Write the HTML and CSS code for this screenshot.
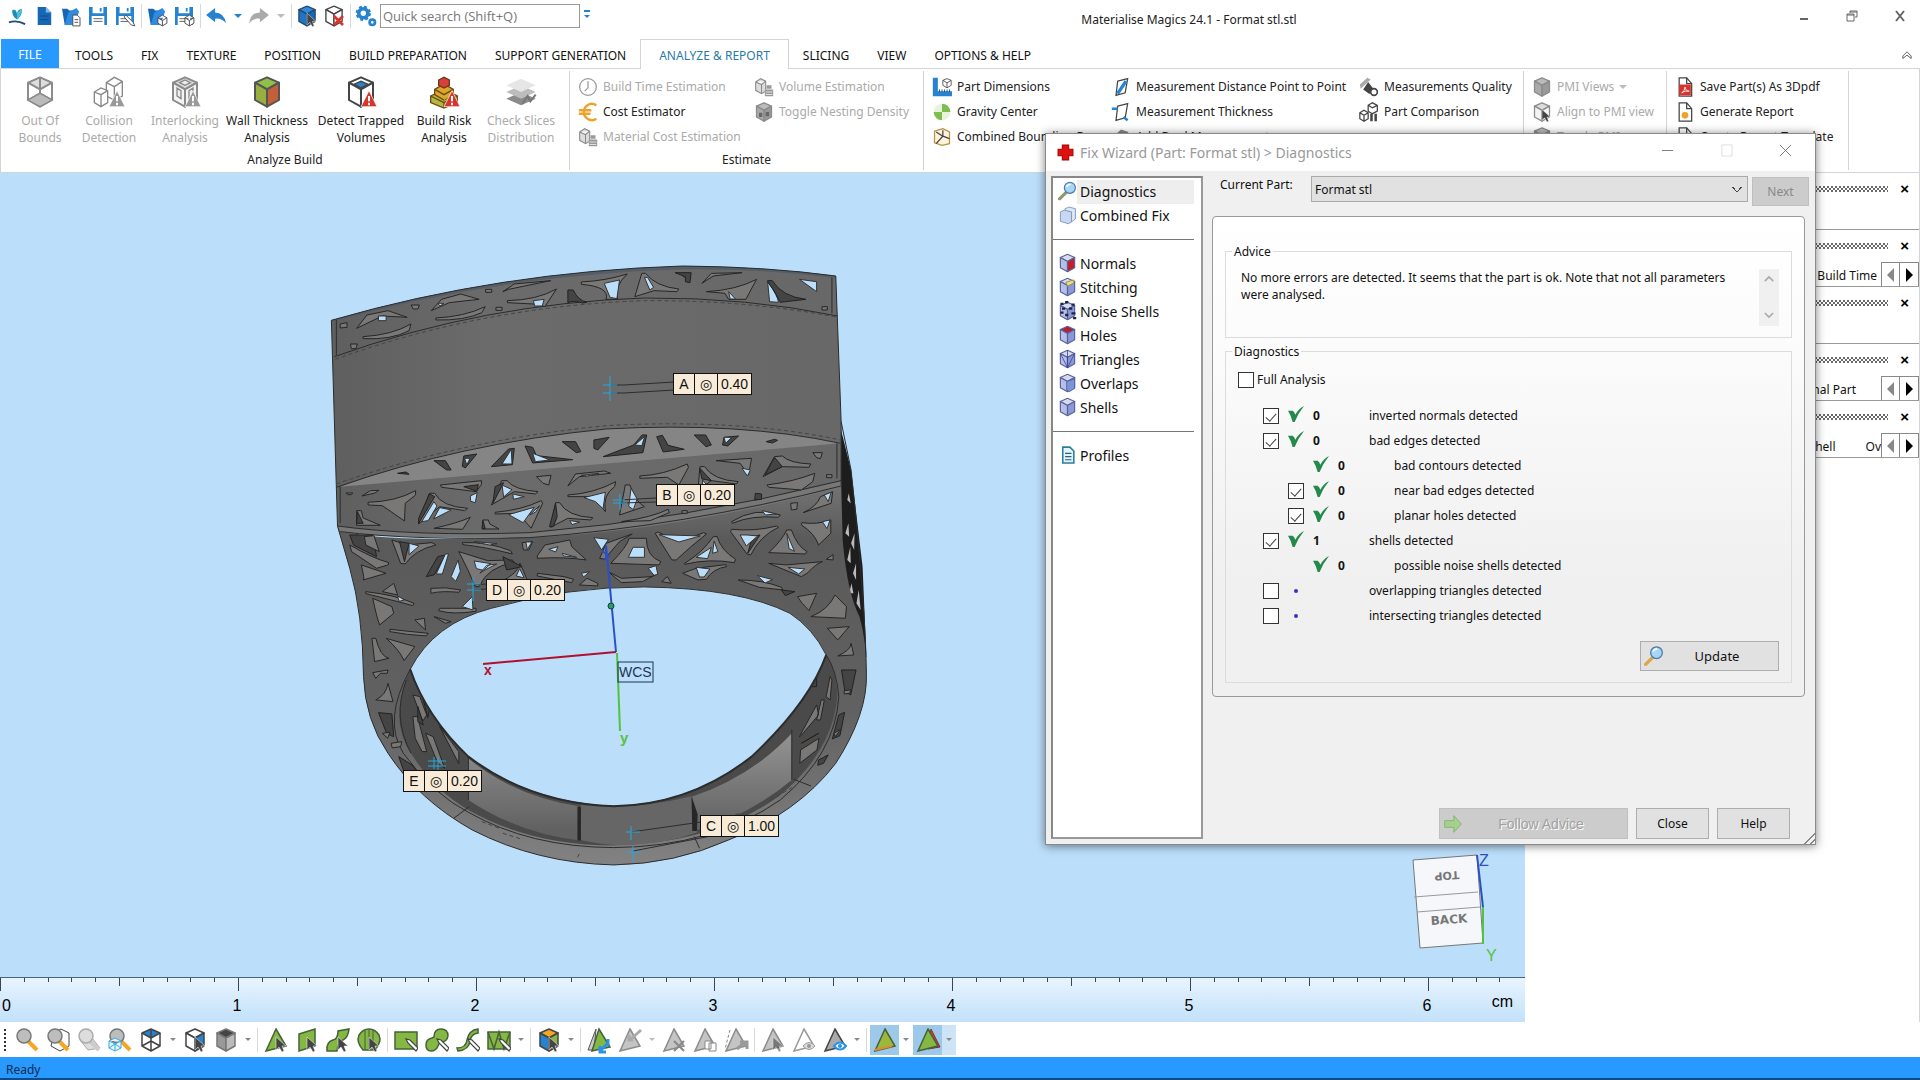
FILE: index.html
```html
<!DOCTYPE html>
<html lang="en">

<head>
    <meta charset="UTF-8">
    <meta name="viewport" content="width=device-width, initial-scale=1.0">
    <title>Materialise Magics 24.1 - Format stl.stl</title>
    <link rel="stylesheet" href="styles.css">
</head>

<body>
    <!-- icon sprite -->
    <svg class="sprite" aria-hidden="true">
        <symbol id="cube" viewBox="0 0 24 24">
            <path class="t" d="M12 1 21 5 12 10 3 5z" />
            <path class="l" d="M3 5 12 10V23L3 18z" />
            <path class="r" d="M21 5 12 10V23L21 18z" />
        </symbol>
        <symbol id="wirecube" viewBox="0 0 24 24">
            <path class="t" d="M12 1 21 5 12 10 3 5z" />
            <path class="n" d="M3 5V18L12 23 21 18V5M12 10V23M3 18 12 13 21 18M12 13V1" />
        </symbol>
        <symbol id="logo" viewBox="0 0 24 24">
            <path d="M7 5c4 0 4 1 5 4 1-3 2-4 5-5 1 5-1 9-5 12C8 13 6 9 7 5z" fill="#1b8fae" />
            <path d="M12 9l5-5c0 5-2 9-5 12z" fill="#45c4e0" />
            <path d="M3 19q9-3 18 2" fill="none" stroke="#1d4d7e" stroke-width="2" />
        </symbol>
        <symbol id="doc" viewBox="0 0 24 24">
            <path d="M5 2h9l6 6v14H5z" fill="#1767b5" />
            <path d="M14 2v6h6z" fill="#7db9e8" />
            <path d="M8 12h9M8 16h9" stroke="#0d4b8c" />
        </symbol>
        <symbol id="open" viewBox="0 0 24 24">
            <path d="M2 4h6l2 2h7l-2 16H5z" fill="#1767b5" />
            <path d="M5 22 9 8l9-5 3 4-5 15z" fill="#2e8be0" />
        </symbol>
        <symbol id="save" viewBox="0 0 24 24">
            <path d="M2 2h20v20H2z" fill="#2583cf" />
            <path d="M6 2h12v7H6zM5 12h14v10H5z" fill="#fff" />
            <path d="M14 3h2v4h-2z" fill="#2583cf" />
            <path d="M7 15h10M7 18h10" stroke="#555" />
        </symbol>
        <symbol id="undo" viewBox="0 0 24 24">
            <path d="M1 11 11 3v5q10 0 12 12-5-6-12-5v4z" fill="currentColor" />
        </symbol>
        <symbol id="page" viewBox="0 0 24 24">
            <path d="M5 1h9l6 7v15H5z" fill="#fff" stroke="#444" stroke-width="1.5" />
            <path d="M14 1v7h6" fill="none" stroke="#444" stroke-width="1.5" />
        </symbol>
        <symbol id="cursor" viewBox="0 0 24 24">
            <path d="M12 9v13l3-3 3 5 2-1-2-5h4z" fill="#444" stroke="#fff" stroke-width=".5" />
        </symbol>
        <symbol id="pencil" viewBox="0 0 24 24">
            <path d="M12 11l2 4 8 8 2-3-8-8z" fill="#fff" stroke="#444" stroke-width="1.2" />
        </symbol>
        <symbol id="warn" viewBox="0 0 24 24">
            <path d="M18 11 24 23H12z" fill="currentColor" stroke="#fff" stroke-width=".5" />
            <path d="M18 15v4M18 20v2" stroke="#fff" stroke-width="1.5" />
        </symbol>
        <symbol id="lens" viewBox="0 0 24 24">
            <path d="M13 13l9 9" stroke="var(--h, #f5a623)" stroke-width="4" />
            <circle cx="9" cy="8" r="7" fill="var(--g, #bdbdbd)" stroke="var(--e, #777)" stroke-width="1.5" />
        </symbol>
        <symbol id="glass" viewBox="0 0 24 24">
            <path d="M11 13 2 22" stroke="var(--h, #8b9b6a)" stroke-width="4" stroke-linecap="round" />
            <circle cx="15" cy="8" r="7" fill="#a8d4f5" stroke="#4a7ba8" stroke-width="1.5" />
            <path d="M11 7q1-4 5-3" stroke="#fff" stroke-width="2" fill="none" />
        </symbol>
        <symbol id="tri" viewBox="0 0 24 24">
            <path d="M12 1 22 18 2 23z" fill="var(--g, #85b843)" stroke="var(--e, #44613a)" stroke-width="1.5" />
        </symbol>
        <symbol id="blocks" viewBox="0 0 24 24">
            <path d="M2 6 8 2l6 3v12l-5 3-7-4zM2 6l7 3 5-4M9 9v11" fill="#ddd" stroke="#8b8b8b" stroke-width="1.3" />
            <path d="M13 15h10v8H13zM15 10h6v4h-6z" fill="#999" />
            <path d="M14 18h8M14 21h8" stroke="#eee" />
        </symbol>
        <symbol id="tick" viewBox="0 0 24 24">
            <path d="M0 7 7 7Q10 9 11 13 16 4 24 0 15 11 10 24L7 24Q5 15 0 7z" fill="#238a4b" />
        </symbol>
        <symbol id="plane" viewBox="0 0 24 24">
            <path d="M8 5 20 2 17 19 6 22z" fill="#fff" stroke="#444" stroke-width="1.5" />
        </symbol>
    </svg>

    <header class="titlebar">
        <nav class="quick" aria-label="Quick access">
            <button><svg><use href="#logo" /></svg></button>
            <button><svg><use href="#doc" /></svg></button>
            <button><svg><use href="#open" /><path d="M14 11h5l3 3v9h-8z" fill="#fff" stroke="#444" /><path d="M16 16h4M16 19h4" stroke="#444" /></svg></button>
            <button><svg><use href="#save" /></svg></button>
            <button><svg><use href="#save" /><path d="M13 11l8 8 2 4-4-1-8-9z" fill="#fff" stroke="#444" /></svg></button>
            <i class="vline"></i>
            <button><svg><use href="#open" /><path d="M13 14l5-3 5 3v6l-5 3-5-3zM13 14l5 3 5-3M18 17v6" fill="#fff" stroke="#444" /></svg></button>
            <button><svg><use href="#save" /><path d="M13 14l5-3 5 3v6l-5 3-5-3zM13 14l5 3 5-3M18 17v6" fill="#fff" stroke="#444" /></svg></button>
            <i class="vline"></i>
            <button class="undo"><svg><use href="#undo" /></svg></button>
            <i class="drop blue"></i>
            <button class="redo"><svg viewBox="0 0 24 24"><path d="M23 11 13 3v5Q3 8 1 20q5-6 12-5v4z" fill="currentColor" /></svg></button>
            <i class="drop pale"></i>
            <i class="vline"></i>
            <button class="c-blue"><svg><use href="#cube" /><use href="#cursor" /></svg></button>
            <button class="c-line"><svg><use href="#cube" /><path d="M12 12l10 10M22 12 12 22" stroke="#d9342b" stroke-width="3" /></svg></button>
            <i class="vline"></i>
            <button><svg><circle cx="9" cy="9" r="5" fill="none" stroke="#2583cf" stroke-width="4" /><circle cx="9" cy="9" r="7" fill="none" stroke="#2583cf" stroke-width="3" stroke-dasharray="3 2.500" /><circle cx="19" cy="19" r="3" fill="none" stroke="#2583cf" stroke-width="3" /></svg></button>
            <input type="search" placeholder="Quick search (Shift+Q)" aria-label="Quick search">
            <i class="drop more"></i>
        </nav>
        <h1>Materialise Magics 24.1 - Format stl.stl</h1>
        <div class="winbtns">
            <button aria-label="Minimize"><svg viewBox="0 0 12 12"><path d="M2 9h8" stroke-width="2" /></svg></button>
            <button aria-label="Restore"><svg viewBox="0 0 12 12"><path d="M4 3V1h7v6H9M1 4h7v7H1zM1 5h7M4 2h7" /></svg></button>
            <button aria-label="Close window"><svg viewBox="0 0 12 12"><path d="M2 1l8 10M10 1 2 11" stroke-width="2" /></svg></button>
        </div>
    </header>

    <nav class="tabs">
        <a class="file" href="#">FILE</a>
        <a href="#">TOOLS</a>
        <a href="#">FIX</a>
        <a href="#">TEXTURE</a>
        <a href="#">POSITION</a>
        <a href="#">BUILD PREPARATION</a>
        <a href="#">SUPPORT GENERATION</a>
        <a class="active" href="#">ANALYZE &amp; REPORT</a>
        <a href="#">SLICING</a>
        <a href="#">VIEW</a>
        <a href="#">OPTIONS &amp; HELP</a>
        <button class="collapse" aria-label="Collapse ribbon"><svg viewBox="0 0 12 12"><path d="M1 6 6 1l5 5v3L6 5 1 9z" /></svg></button>
    </nav>

    <section class="ribbon">
        <div class="group build">
            <div class="big">
                <button disabled><svg viewBox="0 0 24 24" class="c-grey"><use href="#wirecube" /><path d="M3 18l9-5 9 5-9 5z" fill="#bbb" stroke="#8b8b8b" /></svg>Out Of<br>Bounds</button>
                <button disabled><svg viewBox="0 0 24 24" class="grey"><path d="M10 5l6-4 6 3v11l-6 3-6-3zM10 5l6 3 6-4M16 8v10" fill="#fff" stroke="#888" /><path d="M1 12l5-3 5 2v9l-5 3-5-3zM1 12l5 2 5-3M6 14v9" fill="#fff" stroke="#888" /><use href="#warn" /></svg>Collision<br>Detection</button>
                <button disabled><svg viewBox="0 0 24 24" class="c-grey grey"><use href="#cube" /><path d="M6 9l3 2v6l-3-2zM18 9l-3 2v6l3-2zM8 5l4-2 4 2-4 2z" fill="#eee" stroke="#888" /><use href="#warn" /></svg>Interlocking<br>Analysis</button>
                <button><svg viewBox="0 0 24 24" class="c-wall"><use href="#cube" /></svg>Wall Thickness<br>Analysis</button>
                <button><svg viewBox="0 0 24 24" class="c-line red"><use href="#cube" /><path d="M7 6l5-2 5 2-5 3z" fill="#2583cf" stroke="#444" /><use href="#warn" /></svg>Detect Trapped<br>Volumes</button>
                <button><svg viewBox="0 0 24 24" class="red"><path d="M2 15l10-5 10 5v5l-10 4-10-4z" fill="#b5b83b" stroke="#6b4a1b" /><path d="M5 10l7-4 7 4v4l-7 4-7-4z" fill="#e0a52a" stroke="#6b4a1b" /><path d="M12 14l7-4v4l-7 4z" fill="#cfae2a" /><path d="M8 3l4-2 4 2v4l-4 2-4-2z" fill="#d9403a" stroke="#6b3a1b" /><path d="M2 15l10 5 10-5M12 20v4M5 10l7 4 7-4" fill="none" stroke="#6b4a1b" /><use href="#warn" /></svg>Build Risk<br>Analysis</button>
                <button disabled><svg viewBox="0 0 24 24"><path d="M1 17l11-5 11 5-11 5z" fill="#8b8b8b" /><path d="M1 12l11-5 11 5-11 5z" fill="#bcbcbc" /><path d="M1 7l11-5 11 5-11 5z" fill="#e6e6e6" /><path d="M13 21l4-6 2 4 4-5" fill="none" stroke="#777" stroke-width="1.500" /></svg>Check Slices<br>Distribution</button>
            </div>
            <h2>Analyze Build</h2>
        </div>

        <div class="group estimate">
            <div class="cols">
                <div>
                    <button disabled><svg viewBox="0 0 24 24"><circle cx="12" cy="12" r="10" fill="#fff" stroke="#999" stroke-width="1.500" /><path d="M12 5v8l-4 4" fill="none" stroke="#999" stroke-width="1.500" /></svg>Build Time Estimation</button>
                    <button><svg viewBox="0 0 24 24"><path d="M22 4q-5-3-9-1-6 3-6 9t6 9q5 2 9-1M1 10h15M1 14h14" fill="none" stroke="#eca32b" stroke-width="3" /></svg>Cost Estimator</button>
                    <button disabled><svg viewBox="0 0 24 24"><use href="#blocks" /></svg>Material Cost Estimation</button>
                </div>
                <div>
                    <button disabled><svg viewBox="0 0 24 24"><use href="#blocks" /></svg>Volume Estimation</button>
                    <button disabled><svg viewBox="0 0 24 24" class="c-dim"><use href="#cube" /><path d="M6 13h4v5H6zM14 12h4v5h-4z" fill="#666" /></svg>Toggle Nesting Density</button>
                </div>
            </div>
            <h2>Estimate</h2>
        </div>

        <div class="group measure">
            <div class="cols">
                <div>
                    <button><svg viewBox="0 0 24 24"><path d="M1 1h6v16h17v6H1z" fill="#2583cf" /><path d="M9 15v3M12 15v3M15 15v3M18 15v3M21 15v3" stroke="#143c6b" /><path d="M13 4l5-2 5 2v6l-5 3-5-3zM13 4l5 3 5-3M18 7v6" fill="#fff" stroke="#444" /></svg>Part Dimensions</button>
                    <button><svg viewBox="0 0 24 24"><path d="M12 12V2A10 10 0 0 1 22 12zM12 12v10A10 10 0 0 1 2 12z" fill="#7ebd4e" /><path d="M12 2A10 10 0 0 0 2 12h10zM12 22a10 10 0 0 0 10-10H12z" fill="#e7f3dc" /></svg>Gravity Center</button>
                    <button><svg viewBox="0 0 24 24"><path d="M3 5 13 2l8 4v14l-9 2-9-3z" fill="#fdf3dc" stroke="#b79345" stroke-width="1.500" /><path d="M5 20l8-9V4M13 11l8 3M5 6l8 5" fill="none" stroke="#444" stroke-width="1.500" /></svg>Combined Bounding Box</button>
                </div>
                <div>
                    <button><svg viewBox="0 0 24 24"><use href="#plane" /><path d="M8 20 18 5" stroke="#2583cf" stroke-width="4" /></svg>Measurement Distance Point to Point</button>
                    <button><svg viewBox="0 0 24 24"><use href="#plane" /><path d="M1 8h7M15 18l5 4" stroke="#2583cf" stroke-width="3" /></svg>Measurement Thickness</button>
                    <button><svg viewBox="0 0 24 24"><path d="M2 12 12 3l9 3-9 12z" fill="#888" /></svg>Add Dual Measurement</button>
                </div>
                <div>
                    <button><svg viewBox="0 0 24 24"><path d="M1 9 10 1l4 2L2 14z" fill="#aaa" /><path d="M5 15l6-9 3 4 7 9-9 1z" fill="#444" /><circle cx="18" cy="18" r="4" fill="#fff" stroke="#444" stroke-width="2" /></svg>Measurements Quality</button>
                    <button><svg viewBox="0 0 24 24"><path d="M11 4l5-3 6 3v7l-6 3-5-3zM11 4l5 3 6-3M1 13l5-3 5 3v7l-5 3-5-3zM1 13l5 3 5-3M6 16v7" fill="#fff" stroke="#444" stroke-width="1.500" /><path d="M15 14v9M20 14v9" stroke="#444" stroke-width="3" /></svg>Part Comparison</button>
                </div>
            </div>
        </div>

        <div class="group pmi">
            <div class="cols">
                <div>
                    <button disabled><svg viewBox="0 0 24 24" class="c-dim"><use href="#cube" /></svg>PMI Views <i class="drop pale"></i></button>
                    <button disabled><svg viewBox="0 0 24 24" class="c-grey"><use href="#cube" /><use href="#cursor" /></svg>Align to PMI view</button>
                    <button disabled><svg viewBox="0 0 24 24" class="c-dim"><use href="#cube" /></svg>Toggle PMI</button>
                </div>
            </div>
        </div>

        <div class="group report">
            <div class="cols">
                <div>
                    <button><svg viewBox="0 0 24 24"><use href="#page" /><path d="M5 9h14v13H5z" fill="#d9342b" /><path d="M8 19q4-2 4-7 1 5 5 5-5-1-9 2" fill="none" stroke="#fff" /></svg>Save Part(s) As 3Dpdf</button>
                    <button><svg viewBox="0 0 24 24"><use href="#page" /><circle cx="12" cy="16" r="4" fill="#eca32b" /></svg>Generate Report</button>
                    <button><svg viewBox="0 0 24 24"><use href="#page" /></svg>Create Report Template</button>
                </div>
            </div>
        </div>
    </section>

    <main>
        <section class="viewport">
            <div class="canvas">
                <svg class="scene" viewBox="0 173 1525 804" preserveAspectRatio="xMinYMin meet">
                    <defs>
                        <linearGradient id="body" x1="0" x2="1">
                            <stop offset="0" stop-color="#5f5f5f" />
                            <stop offset=".3" stop-color="#6b6b6b" />
                            <stop offset="1" stop-color="#686868" />
                        </linearGradient>
                        <linearGradient id="lower" x1="0" x2="0" y1="0" y2="1">
                            <stop offset="0" stop-color="#747474" />
                            <stop offset=".15" stop-color="#5a5a5a" />
                            <stop offset=".6" stop-color="#616161" />
                            <stop offset="1" stop-color="#828282" />
                        </linearGradient>
                        <linearGradient id="slab" x1="0" x2="0" y1="0" y2="1">
                            <stop offset=".1" stop-color="#8e8e8e" />
                            <stop offset=".9" stop-color="#616161" />
                        </linearGradient>
                    </defs>
                    <g class="ring" transform="translate(300 240) scale(.3827 .3333)">
                        <!-- far side seen on the right -->
                        <path fill="#1d1d1d" d="M1405 530 1440 690 1470 980 1480 1250 1440 1290 1400 1000z" />
                        <path class="chip" d="M1425 880l8-30 2 40zM1440 910l9-30-1 50zM1430 960l8-40 1 50zM1445 1000l8-30 0 50zM1435 1060l6-30 5 30zM1454 1090l6-40 5 60zM1430 780l4-20 5 30z" />
                        <!-- band and lower ring -->
                        <path fill="url(#lower)" d="M98 860Q140 905 500 895Q1000 870 1414 730L1418 900Q1430 1060 1462 1130Q1480 1200 1480 1300Q1484 1420 1400 1570Q1300 1720 1120 1800Q980 1872 820 1875Q620 1870 450 1770Q310 1680 230 1540Q170 1440 166 1310Q164 1120 130 985z" />
                        <!-- inside of the band -->
                        <path fill="#4a4a4a" d="M288 1288Q230 1440 290 1540Q350 1650 440 1710Q600 1815 820 1817Q1080 1810 1250 1670Q1390 1540 1404 1370Q1402 1290 1375 1245Q1330 1390 1180 1550Q1020 1695 820 1699Q600 1690 440 1550Q330 1430 288 1288z" />
                        <path fill="#666" d="M733 1695Q880 1710 1025 1668L1038 1778Q880 1840 733 1800z" />
                        <path fill="url(#slab)" d="M440 1555Q560 1670 733 1700V1802Q570 1780 440 1680zM1025 1670Q1180 1610 1285 1480V1620Q1170 1730 1038 1770z" />
                        <path fill="#262626" d="M725 1700h9v102h-9zM1023 1668l16 55-2 50h-12z" />
                        <path class="ledge" d="M295 1365l18 5 18 55-10 18zM295 1430l12 0 24 105-12 0-18-40zM328 1480l20 10 30 95-18-16zM365 1460l50 75 0 36zM1305 1490l45-95 5 30-48 65zM1350 1440l12-60 8 0-10 60zM1375 1370l10-60 5 10-5 60zM1308 1530l48-35-5 35-45 40z" />
                        <path class="cut" d="M318 1360l26 15-10 58zM308 1400l14 55-14-10zM1330 1340l20-40 0 40zM1310 1510l45-30z" />
                        <!-- seat opening -->
                        <path class="sky" d="M288 1288Q350 1150 500 1105Q700 1040 900 1041Q1150 1045 1280 1120Q1340 1165 1375 1245Q1330 1390 1180 1550Q1020 1695 820 1699Q600 1690 440 1550Q330 1430 288 1288z" />
                        <path class="edge thick" d="M288 1288Q330 1430 440 1550Q600 1690 820 1699Q1020 1695 1180 1550Q1330 1390 1375 1245" />
                        <path class="edge" d="M288 1288Q215 1440 270 1540Q350 1665 440 1717Q600 1822 820 1823Q1080 1820 1255 1680Q1400 1540 1408 1370Q1402 1290 1375 1245M278 1320Q240 1430 290 1540M402 1735l40-35M1290 1618l45 20M1030 1790l14 35M440 1550V1680M1285 1470V1620" />
                        <path class="dash" d="M475 1745l50 22M530 1780l50 18M1230 1680l60-40M1120 1730l30-10M725 1852l6-12" />

                        <!-- upper block -->
                        <path fill="url(#body)" d="M82 241Q520 95 1000 78Q1220 80 1400 108L1414 545 1414 735Q1000 870 500 885Q200 880 98 858z" />
                        <path fill="#555d66" d="M82 241Q520 95 1000 78Q1220 80 1400 108V114Q1210 86 1000 88Q520 105 95 242z" />
                        <path fill="#858585" d="M105 740Q420 610 800 567Q1150 545 1412 610z" />
                        <path fill="#777" d="M98 858Q300 890 600 878Q1000 840 1414 722V740Q1000 870 600 893Q200 895 105 875z" />
                        <path class="edge" d="M82 241Q520 95 1000 78Q1220 80 1400 108L1414 545V735M82 241L98 858 130 985M95 240V345M1390 112V220M90 350Q480 190 900 174Q1170 172 1405 228M95 742Q420 610 800 567Q1150 545 1412 610M105 740V850M1403 610V715M98 858Q300 890 600 878Q1000 840 1414 722M105 875Q300 902 600 893Q1000 860 1414 738" />
                        <path class="edge" d="M130 985Q164 1120 166 1310Q170 1440 230 1540Q310 1680 450 1770Q620 1870 820 1875Q980 1872 1120 1800Q1300 1720 1400 1570Q1484 1420 1480 1300Q1478 1100 1440 690L1414 545" />
                        <path class="dash" d="M92 358Q480 198 900 182Q1170 180 1405 232M95 732Q420 600 800 557Q1150 535 1412 600" />

                        <!-- top lattice -->
                        <path class="ledge" d="M148 265 175 225 230 212 280 232 215 228zM165 290Q240 285 290 252L285 272Q240 300 165 296zM343 212 370 178 420 162 468 178 390 188zM355 234Q430 230 484 200L475 218Q430 242 355 240zM530 155 560 132 655 122 545 148zM542 182Q620 180 670 147L640 200 610 192 542 188zM735 126Q800 122 855 102Q820 140 830 178H800Q810 140 735 133zM875 170 893 100H903Q930 140 990 147L985 155 925 152zM1050 130 1075 100 1155 98 1080 108zM1062 155Q1140 150 1193 118L1165 178H1120L1110 160zM105 252l18-4v14l-18 2zM132 312h18l-4 14h-12zM290 195h22l-4 12h-12zM485 148h16v9h-16zM512 202h16v9h-16zM1364 200h14v10h-14z" />
                        <path class="sky" d="M205 228h20v14h-20zM610 182l28-4-5 20-20 0zM795 130 835 120 828 176 810 172zM900 112l8 0 16 30-10 8zM1120 155l18 22-14 0zM703 150Q720 180 740 187L712 180zM1222 125Q1250 170 1250 187L1227 185zM360 190h16l-10 8zM1305 118 1350 125V155zM1000 108h18v15z" />
                        <path class="cut" d="M700 150h14Q725 180 750 187L738 189Q715 180 700 188zM1222 122h12Q1260 170 1322 178L1255 187Q1240 150 1222 125zM980 98h42l-3 30-12-3v-15z" />

                        <!-- fins under the dome -->
                        <path class="cut" d="M350 662h30l15 28-12 0zM428 648l34-6-30 42-8-5zM500 680 545 627 560 625 555 674zM588 618l20 4 10 25 95 12-105 10zM685 605h35l14 30-12 3zM768 600l40-8-30 38-10-5zM792 650l80-35 22-30 12 0-10 53zM932 590l15-4 15 30 42 12-55 8zM1030 585h30l15 30-14 5zM1108 592l38-4-28 30-14-3zM255 700l22-4 8 7zM1218 605l22-7 8 3-14 8z" />
                        <path class="sky" d="M528 672 552 628 554 672zM608 640l45 20-38 5zM875 615l26-26-8 28zM1108 592h20l-16 18zM430 655h14l-8 20z" />

                        <!-- middle lattice -->
                        <path class="ledge" d="M178 787Q250 785 302 752V765L275 790 273 843 215 797 178 795zM367 735 474 722V734L460 755 370 742zM510 817Q580 810 630 782L634 790 604 865 570 820 510 822zM618 710 656 706 650 735 635 730zM700 738 720 702 795 693 812 700 730 710zM700 765Q770 760 825 725L822 740Q790 765 798 815L780 790 755 770 700 770zM888 708Q950 705 1012 672L1015 682 990 735 960 712 888 715zM1087 662 1180 655 1172 705 1150 670zM1210 710 1240 650 1260 648Q1280 670 1335 672L1330 682 1260 680zM1340 638h25l-5 18-10-3zM1220 735Q1290 725 1345 700L1340 725 1310 750 1225 742zM162 768l22-16 22-1-10 8zM120 759h18l-4 5h-10zM998 812h14v8h-14zM1376 704h14v9h-14zM350 865Q410 850 445 832L425 868zM840 845Q920 832 962 808L965 818 915 842zM478 840h14l4 12 24 15h-44z" />
                        <path class="ledge" d="M527 722h14Q560 750 622 755L615 762 560 755 500 795zM338 760h14Q370 800 438 805L430 812 365 800 310 852zM1045 680h12Q1080 720 1145 725L1140 732 1075 722 1040 750zM668 788h10Q700 830 765 833L760 840 700 835 655 862zM850 735h12Q880 790 900 800L835 825zM148 812h12l5 22 45 22h-62z" />
                        <path class="cut" d="M338 762l14 8-42 80 0-15zM510 740l22-12-28 62zM428 740l38-6-4 20zM668 790l4 40-10 30-10 0zM1045 685l30 37-25-5zM1240 652l20 28-45 25zM150 815l15 35-17 0zM1190 760l16 2 0 16-18 2zM478 842l6 24-8 0z" />
                        <path class="sky" d="M318 845 350 785 358 798 335 842zM365 803l30 7-46 27zM445 768l18-10-5 30-12-4zM528 735l26 14-22 22zM545 824 612 802 583 848zM742 773 798 757 792 806 772 785zM865 745l16 32-10 32-12-10zM1052 720l16 22-16 5zM1155 685l22 5-8 18zM600 825 626 797 616 816zM556 762l30 8-28 8zM705 842l26 4-20 8zM735 706l46-6-30 8z" />

                        <!-- lower lattice -->
                        <path class="ledge" d="M130 915Q190 955 232 968L230 975 200 985 135 935zM240 900 263 970 275 972Q300 930 355 915L345 908 280 915zM425 908Q490 905 550 932L555 942Q480 920 425 914zM620 948 640 915 705 900 710 920 748 960Q690 950 620 955zM812 970Q855 920 860 895H905Q905 950 943 965L938 975zM928 880 972 960 983 960Q1020 920 1062 882L1055 878Q990 915 935 876zM1005 970Q1050 940 1080 890H1090Q1100 930 1138 958L1135 968Q1070 955 1005 973zM1125 875 1168 942 1178 945Q1200 890 1250 862L1245 858Q1190 875 1128 868zM1128 845Q1190 800 1255 825L1250 832Q1180 825 1130 850zM1225 938Q1260 900 1272 870H1284Q1300 920 1325 935L1320 942zM1310 855Q1345 880 1355 915L1387 880V840Q1350 855 1312 848zM1315 818Q1350 800 1360 770L1392 755 1388 790zM1282 790l18-2-2 20-14 2zM580 908l28-3-10 25-14 0zM1375 958l18-14v16zM783 955 800 910 868 882 835 905 795 958z" />
                        <path class="ledge" d="M160 975Q170 1020 165 1020L225 1000zM172 1055Q250 1065 298 1090L295 1097Q240 1080 172 1061zM245 1030 255 1065 215 1055zM415 935Q440 990 458 1040L468 1040Q490 980 560 968L555 960 490 962zM342 1045Q380 1040 420 1050L415 1057Q370 1052 342 1060zM190 1075Q200 1130 208 1155L245 1120 240 1100zM365 1105Q430 1105 460 1105V1114Q400 1125 362 1112zM235 1168Q290 1175 335 1180L330 1188Q280 1185 235 1175zM300 1140 325 1135 328 1170zM350 1130 380 1140 395 1145 380 1150zM525 1025Q570 1000 575 970L590 1010 600 1040zM620 1000 690 1010 715 1018 710 1028Q650 1015 620 1008zM730 1035 750 1015 778 1030 778 1038zM805 995 840 1015 920 1010 935 1000 895 1025 840 1028zM945 1025 960 1010 970 1030zM1000 1000 1040 1020 1062 1018Q1080 985 1115 980L1112 974 1035 985zM1145 1020Q1210 1020 1258 1042L1262 1050 1200 1042zM1225 970 1310 1010 1325 1000Q1350 970 1365 965L1270 975zM1300 1070Q1310 1090 1330 1112L1350 1060zM1335 1130Q1380 1110 1398 1065L1428 1100 1425 1135zM1378 1165 1435 1160 1405 1200zM1405 1248Q1440 1230 1440 1210L1447 1245zM225 1195Q260 1230 272 1262L300 1220zM188 1195H198Q210 1250 232 1255L195 1265zM190 1298 230 1290 228 1300 210 1300 198 1315zM198 1380Q225 1365 230 1330L243 1385zM238 1510l28-5-3 15-22 4z" />
                        <path class="cut" d="M130 885h60l10 65-60-35zM260 905l25 5-12 55zM205 1418l35 4 5 68-18-8zM258 1550l35 25 30 50-50-25zM1415 1290l38 0-14 75-15-10zM1408 1425l15-8-12 70-20 10zM1355 1560l25-15-12 25-15 6zM360 950l20-5-30 60-20 5zM530 950l50 30-40 10zM600 1050l20-30 14 20zM1170 940l12-50 20-5zM1258 1050l35 5-25 12z" />
                        <path class="ledge" d="M168 890l25-3 14 48-35-20zM1422 1352l18-2-4 10-14 2zM215 1480l20-3-6 18zM1395 1480l18-12-14 22z" />
                        <path class="sky" d="M768 893l38 5-18 32zM938 884l108 4-56 18zM1082 903l10 32-14 5zM1168 885l28 3-30 30-16-33zM1272 880 1292 934 1278 926zM1370 765l18-8-8 28zM858 952l12-30 30 0 0 30zM285 910l26 8-26 26zM380 942l8 0-16 60-16 0zM455 963l44 8-20 20-18-5zM590 906l16 0-12 22zM685 940l38 12-34-4zM1208 812l36 10-28 3zM1365 845l20-5-8 26zM565 1008l9-22 12 28zM910 985l20-8 5 26-10 3zM1035 982l36 5-15 24-12 0zM1195 1007l40 12-20 10zM1275 982l44 5-16 15zM735 1000l22-5-16 16zM424 1100l26-30 2 40zM255 1068l18 12-14 4zM455 905l60 6-20 4zM650 928l24-8-6 16zM1035 952l40-30-10 34zM470 1000l18-24 26-4-34 20zM395 1010l18-50 6 34-12 30z" />
                    </g>

                    <!-- leaders -->
                    <path class="edge" d="M610 385h14l50-3M610 393h14l50-3M620 500l36-2M620 503l36-1M631 832l70-10M633 851l78-15M473 585l13-1M473 590l13-1" />
                    <path class="probe" d="M610 376v25M603 385h14M603 393h14M620 494v16M613 500h12M613 503h14M473 577v24M467 584h14M467 590h14M434 757v12M438 757v14M428 761h18M428 766h18M631 826v14M633 846v16M626 832h14M627 852h14" />
                    <!-- world axes -->
                    <path d="M606 545l10 107" stroke="#2c50c4" stroke-width="2" />
                    <path d="M606 545v16M602 551l8 6" stroke="#2c50c4" stroke-width="2" />
                    <path d="M616 652 483 664" stroke="#b01030" stroke-width="2" />
                    <path d="M617 653l3 78" stroke="#55c23d" stroke-width="2" />
                    <circle cx="611" cy="606" r="3" fill="#2c9a6a" stroke="#143" />
                    <text x="484" y="675" fill="#b01030" font-size="14" font-weight="bold">x</text>
                    <text x="620" y="743" fill="#55c23d" font-size="15" font-weight="bold">y</text>
                    <rect x="618" y="662" width="35" height="20" fill="none" stroke="#1c3454" />
                    <text x="619" y="677" fill="#1c3454" font-size="14">WCS</text>

                    <!-- view cube -->
                    <path d="M1413 860 1477 855 1483 943 1420 948z" fill="#f5f7fa" stroke="#777" />
                    <path d="M1414 897l64-5M1417 912l63-5" stroke="#999" fill="none" />
                    <path d="M1477 855l6 52" stroke="#2c50c4" stroke-width="2" />
                    <path d="M1483 907v37" stroke="#55c23d" stroke-width="2" />
                    <text class="face" x="-14" y="0" font-size="11" transform="translate(1445 872) rotate(176)">TOP</text>
                    <text class="face" x="1431" y="925" font-size="12" transform="rotate(-4 1431 925)">BACK</text>
                    <text x="1479" y="866" fill="#2c50c4" font-size="16">Z</text>
                    <text x="1486" y="961" fill="#55c23d" font-size="16">Y</text>
                </svg>
                <div class="tag tag-a"><span>A</span><span>◎</span><span>0.40</span></div>
                <div class="tag tag-b"><span>B</span><span>◎</span><span>0.20</span></div>
                <div class="tag tag-c"><span>C</span><span>◎</span><span>1.00</span></div>
                <div class="tag tag-d"><span>D</span><span>◎</span><span>0.20</span></div>
                <div class="tag tag-e"><span>E</span><span>◎</span><span>0.20</span></div>
            </div>
            <div class="ruler">
                <span class="zero">0</span><span>1</span><span>2</span><span>3</span><span>4</span><span>5</span><span>6</span>
                <b>cm</b>
            </div>
        </section>

        <aside class="docks">
            <section><header><i></i><button aria-label="Close panel">×</button></header></section>
            <section><header><i></i><button aria-label="Close panel">×</button></header><div class="strip"><span>Build Time</span><button class="prev" aria-label="Previous"></button><button class="next" aria-label="Next"></button></div></section>
            <section><header><i></i><button aria-label="Close panel">×</button></header></section>
            <section><header><i></i><button aria-label="Close panel">×</button></header><div class="strip part"><span>Original Part</span><button class="prev" aria-label="Previous"></button><button class="next" aria-label="Next"></button></div></section>
            <section><header><i></i><button aria-label="Close panel">×</button></header><div class="strip shell"><span>Shell</span><span>Ov</span><button class="prev" aria-label="Previous"></button><button class="next" aria-label="Next"></button></div></section>
        </aside>
    </main>

    <nav class="toolbar" aria-label="View tools">
        <i class="grip"></i>
        <button><svg><use href="#lens" /></svg></button>
        <button class="c-line"><svg><path d="M8 5l7-4 8 4v13l-9 5-9-5z" fill="#fff" stroke="#444" /><use href="#lens" /></svg></button>
        <button class="faded"><svg><path d="M3 12l8 10 12-2-8-10z" fill="#ddd" stroke="#aaa" /><use href="#lens" /></svg></button>
        <button><svg><use href="#lens" /><path d="M1 13l6-3 6 3v7l-6 3-6-3zM1 13l6 3 6-3M7 16v7M1 20l6-4 6 4" fill="#e4f5fd" stroke="#36a9e1" /></svg></button>
        <button class="c-top"><svg><use href="#wirecube" /></svg></button>
        <i class="drop"></i>
        <button class="c-side"><svg><use href="#cube" /><use href="#cursor" /></svg></button>
        <button class="c-solid"><svg><use href="#cube" /></svg></button>
        <i class="drop"></i>
        <i class="vline"></i>
        <button><svg><use href="#tri" /><use href="#cursor" /></svg></button>
        <button><svg><path class="green" d="M4 6 20 1v17L4 23z" /><use href="#cursor" /></svg></button>
        <button><svg><path class="green" d="M1 23q-1-9 6-11 5-1 5-9l11-2q-1 9-6 11-5 2-6 11z" /><use href="#cursor" /></svg></button>
        <button><svg><path class="green" d="M6 22Q-1 14 2 7q4-6 10-6t10 6q3 7-4 15z" /><path d="M8 2v20M12 2v20M16 2v20" stroke="#44613a" /><use href="#cursor" /></svg></button>
        <i class="vline"></i>
        <button><svg><path class="green" d="M1 4h22v17H1z" /><use href="#pencil" /></svg></button>
        <button><svg><path class="green" d="M9 9q0-8 7-8t7 7q-1 6-7 6-2 1-3 4-2 5-7 5T1 17q0-6 6-7z" /><use href="#pencil" /></svg></button>
        <button><svg><path class="green" d="M1 20q9 0 10-8 2-10 11-11v4q-7 1-8 8-1 9-12 10z" /><use href="#pencil" /></svg></button>
        <button><svg><path class="green" d="M1 4h22v17H1z" /><path d="M1 4l6 17 5-17 5 17 6-17" fill="none" stroke="#44613a" stroke-width="1.500" /><use href="#pencil" /></svg></button>
        <i class="drop"></i>
        <i class="vline"></i>
        <button class="c-multi"><svg><use href="#cube" /><use href="#cursor" /></svg></button>
        <i class="drop"></i>
        <i class="vline"></i>
        <button><svg><path d="M9 1 1 22h6z" fill="#ccc" stroke="#555" /><path class="green" d="M12 1 23 19 5 23z" /><path d="M13 23l8-8M21 11v7M13 18v6h6" stroke="#2a93e8" stroke-width="3" fill="none" /></svg></button>
        <button class="t-grey"><svg><use href="#tri" /><path d="M12 12 23 2M15 12h-4V7" stroke="#aaa" stroke-width="3" fill="none" /></svg></button>
        <i class="drop pale"></i>
        <button class="t-grey"><svg><use href="#tri" /><path d="M12 13l10 10M22 13 12 23" stroke="#888" stroke-width="2" /></svg></button>
        <button class="t-grey"><svg><use href="#tri" /><path d="M12 13h6v8h-6zM16 15h7v8h-7z" fill="#fff" stroke="#888" /></svg></button>
        <button class="t-grey"><svg><use href="#tri" /><path d="M6 2 1 21" stroke="#888" stroke-dasharray="3 2" /><path d="M13 21l7-6M16 14h7v7" stroke="#999" stroke-width="3" fill="none" /></svg></button>
        <i class="vline"></i>
        <button class="t-grey"><svg><use href="#tri" /><use href="#cursor" opacity=".6" /></svg></button>
        <button class="t-white"><svg><use href="#tri" /><path d="M11 18q6-7 12 0-6 7-12 0z" fill="#ddd" stroke="#999" /><circle cx="17" cy="18" r="2" fill="#999" /></svg></button>
        <button class="t-dark"><svg><use href="#tri" /><path d="M11 18q6-7 12 0-6 7-12 0z" fill="#fff" stroke="#2a93e8" stroke-width="2" /><circle cx="17" cy="18" r="2" fill="#2a93e8" /></svg></button>
        <i class="drop"></i>
        <i class="vline"></i>
        <button class="on t-olive"><svg><path d="M14 1 23 19 15 21z" fill="#c8c19a" /><use href="#tri" /><path d="M2 22l17-4" stroke="#d98c33" stroke-width="2" /></svg></button>
        <button class="more" aria-label="More marking options"><i class="drop"></i></button>
        <button class="on"><svg><path d="M15 1 24 19 12 21z" fill="#d9403a" stroke="#8a2a20" /><use href="#tri" /></svg></button>
        <button class="more lit" aria-label="More shading options"><i class="drop"></i></button>
    </nav>

    <footer>Ready</footer>

    <section class="dialog" role="dialog" aria-label="Fix Wizard">
        <header>
            <svg viewBox="0 0 16 16"><path d="M5 1h6v4h4v6h-4v4H5v-4H1V5h4z" fill="#e01010" stroke="#9c0808" /></svg>
            <h2>Fix Wizard (Part: Format stl) &gt; Diagnostics</h2>
            <button aria-label="Minimize dialog"><svg viewBox="0 0 14 14"><path d="M1 7h12" /></svg></button>
            <button class="off" aria-label="Maximize dialog" disabled><svg viewBox="0 0 14 14"><path d="M2 1h11v12H2z" /></svg></button>
            <button aria-label="Close dialog"><svg viewBox="0 0 14 14"><path d="M1 1l12 12M13 1 1 13" /></svg></button>
        </header>
        <div class="panes">
            <nav class="pages">
                <a class="current" href="#"><svg viewBox="0 0 24 24"><use href="#glass" /></svg>Diagnostics</a>
                <a href="#"><svg viewBox="0 0 24 24"><path d="M9 4l5-2 8 2v13l-4 3-9-3z" fill="#dce6f5" stroke="#6f86b8" /><path d="M3 8l5-2 9 2v13l-4 2-10-3z" fill="#c9d8f0" stroke="#6f86b8" /></svg>Combined Fix</a>
                <hr>
                <a href="#"><svg viewBox="0 0 24 24" class="c-lilac c-redside"><use href="#cube" /></svg>Normals</a>
                <a href="#"><svg viewBox="0 0 24 24" class="c-lilac"><use href="#cube" /><path d="M10 6l10-3v4l-8 4z" fill="#e8e07a" stroke="#8a8545" /></svg>Stitching</a>
                <a href="#"><svg viewBox="0 0 24 24" class="c-lilac"><use href="#cube" /><path d="M3 3h4M9 1h4M17 4h4M5 9h4M14 9h4M3 14h4M9 17h4M17 15h5M19 21h4" stroke="#1c2440" stroke-width="3" /></svg>Noise Shells</a>
                <a href="#"><svg viewBox="0 0 24 24" class="c-lilac c-redtop"><use href="#cube" /></svg>Holes</a>
                <a href="#"><svg viewBox="0 0 24 24" class="c-lilac"><use href="#cube" /><path d="M3 5 12 23 21 5M12 1v22" fill="none" stroke="#3c3c9c" /></svg>Triangles</a>
                <a href="#"><svg viewBox="0 0 24 24" class="c-lilac"><use href="#cube" /><path d="M11 10l10-3v12l-7 4-3-2z" fill="#7d95d8" stroke="#4a5c9c" /></svg>Overlaps</a>
                <a href="#"><svg viewBox="0 0 24 24" class="c-lilac"><use href="#cube" /></svg>Shells</a>
                <hr>
                <a href="#"><svg viewBox="0 0 24 24"><path d="M6 2h9l5 5v15H6z" fill="#e3f3fa" stroke="#2b7d9c" stroke-width="2" /><path d="M9 10h8M9 14h8M9 18h8" stroke="#2b5d7c" stroke-width="1.500" /></svg>Profiles</a>
            </nav>
            <div class="content">
                <div class="partrow">
                    <label for="part">Current Part:</label>
                    <select id="part"><option>Format stl</option></select>
                    <button disabled>Next</button>
                </div>
                <div class="sheet">
                    <fieldset class="advice">
                        <legend>Advice</legend>
                        <p>No more errors are detected. It seems that the part is ok. Note that not all parameters<br>were analysed.</p>
                        <div class="scroller">
                            <svg viewBox="0 0 12 8"><path d="M1 6l5-5 5 5" /></svg>
                            <svg viewBox="0 0 12 8"><path d="M1 1l5 5 5-5" /></svg>
                        </div>
                    </fieldset>
                    <fieldset class="diag">
                        <legend>Diagnostics</legend>
                        <label class="full"><input type="checkbox">Full Analysis</label>
                        <label class="row"><input type="checkbox" checked><svg><use href="#tick" /></svg><b>0</b><span>inverted normals detected</span></label>
                        <label class="row"><input type="checkbox" checked><svg><use href="#tick" /></svg><b>0</b><span>bad edges detected</span></label>
                        <div class="row sub"><i></i><svg><use href="#tick" /></svg><b>0</b><span>bad contours detected</span></div>
                        <label class="row sub"><input type="checkbox" checked><svg><use href="#tick" /></svg><b>0</b><span>near bad edges detected</span></label>
                        <label class="row sub"><input type="checkbox" checked><svg><use href="#tick" /></svg><b>0</b><span>planar holes detected</span></label>
                        <label class="row"><input type="checkbox" checked><svg><use href="#tick" /></svg><b>1</b><span>shells detected</span></label>
                        <div class="row sub"><i></i><svg><use href="#tick" /></svg><b>0</b><span>possible noise shells detected</span></div>
                        <label class="row"><input type="checkbox"><i class="dot"></i><b></b><span>overlapping triangles detected</span></label>
                        <label class="row"><input type="checkbox"><i class="dot"></i><b></b><span>intersecting triangles detected</span></label>
                        <button class="update"><svg viewBox="0 0 24 24"><use href="#glass" /></svg><span>Update</span></button>
                    </fieldset>
                </div>
                <div class="actions">
                    <button class="follow" disabled><svg viewBox="0 0 24 24"><path d="M2 8h11V2l9 10-9 10v-6H2z" fill="#a5d18c" stroke="#7fae6b" /></svg><span>Follow Advice</span></button>
                    <button>Close</button>
                    <button>Help</button>
                </div>
            </div>
        </div>
        <i class="resize"></i>
    </section>
</body>

</html>
```

FILE: styles.css
```css
* {
    box-sizing: border-box;
}

body {
    margin: 0;
    min-height: 100vh;
    display: flex;
    flex-direction: column;
    position: relative;
    background: #fff;
    color: #222;
    font: 12px/17px "Noto Sans", "Open Sans", sans-serif;
}

button {
    font: inherit;
    color: inherit;
    background: none;
    border: 0;
    padding: 0;
}

a {
    color: inherit;
    text-decoration: none;
}

svg {
    overflow: visible;
    flex: none;
}

h1,
h2 {
    margin: 0;
    font-size: 12px;
    font-weight: 400;
}

.sprite {
    position: absolute;
    width: 0;
    height: 0;
}

/* cube colourings */
.t, .l, .r, .n {
    stroke: var(--s, #444);
    stroke-width: 1.5;
    stroke-linejoin: round;
}

.t { fill: var(--t, #fff); }
.l { fill: var(--l, #fff); }
.r { fill: var(--r, #fff); }
.n { fill: none; }

.c-blue { --t: #2e8be0; --l: #1f74c4; --r: #1767b5; --s: #2a4a6b; }
.c-line { --s: #444; }
.c-grey { --t: #ddd; --l: #f4f4f4; --r: #f4f4f4; --s: #8b8b8b; }
.c-dim { --t: #bbb; --l: #aaa; --r: #999; --s: #8b8b8b; }
.c-wall { --t: #8fc048; --l: #9aae3f; --r: #c2603a; --s: #555; }
.c-top { --t: #2583cf; }
.c-side { --r: #2583cf; }
.c-solid { --t: #444; --l: #999; --r: #bbb; --s: #777; }
.c-multi { --t: #f5a623; --l: #2583cf; --r: #85b843; }
.c-lilac { --t: #d5daf2; --l: #b5bfe8; --r: #8b98d8; --s: #5a6396; }
.c-redside { --r: #c41e2a; }
.c-redtop { --t: #b81e34; }
.grey { color: #999; }
.red { color: #d9342b; }

.green {
    fill: #85b843;
    stroke: #44613a;
    stroke-width: 1.5;
}

.t-grey { --g: #c4c4c4; --e: #8b8b8b; }
.t-white { --g: #fff; --e: #999; }
.t-dark { --g: #aaa; --e: #444; }
.t-olive { --g: #9cb83c; }

.faded { --h: #ccc; --g: #ddd; --e: #aaa; }

.drop {
    width: 0;
    height: 0;
    border: 4px solid transparent;
    border-top-color: #888;
    border-bottom: 0;
    flex: none;
}

.drop.blue { border-top-color: #2583cf; }
.drop.pale { border-top-color: #bbb; }

.vline {
    width: 1px;
    height: 24px;
    background: #d8d8d8;
}

/* title bar */
.titlebar {
    height: 39px;
    display: flex;
    align-items: flex-start;
}

.quick {
    display: flex;
    align-items: center;
    padding: 4px 0 0 4px;
    height: 28px;
}

.quick button {
    width: 24px;
    height: 24px;
    margin: 0 2px 0 1px;
}

.quick button svg {
    width: 24px;
    height: 24px;
    transform: scale(.9);
}

.quick .vline {
    margin: 0 2px;
}

.quick .undo {
    color: #2583cf;
}

.quick .redo {
    color: #aaa;
}

.quick .drop {
    margin: 0 4px;
}

.quick .drop.more {
    border-width: 3px;
    border-bottom: 0;
    border-top-color: #2583cf;
    position: relative;
}

.drop.more::before {
    content: "";
    position: absolute;
    left: -3px;
    top: -8px;
    width: 6px;
    height: 2px;
    background: #2583cf;
}

.quick input {
    width: 200px;
    height: 24px;
    border: 1px solid #999;
    padding: 0 2px;
    font: 13px "Open Sans", sans-serif;
    outline: 0;
}

.quick input::placeholder {
    color: #777;
}

.titlebar h1 {
    flex: 1;
    padding: 11px 14px 0 0;
    white-space: nowrap;
    text-align: center;
}

.winbtns {
    display: flex;
    padding: 10px 14px 0 0;
    gap: 36px;
}

.winbtns svg {
    width: 12px;
    height: 12px;
    stroke: #666;
    fill: none;
    display: block;
}

/* tabs */
.tabs {
    display: flex;
    height: 30px;
    position: relative;
    z-index: 1;
}

.tabs a {
    padding: 8px 14px 0;
    color: #111;
}

.tabs .file {
    width: 58px;
    margin: 0 2px 1px 1px;
    padding: 7px 0 0;
    text-align: center;
    background: #2899ff;
    color: #fff;
}

.tabs .active {
    color: #2a7ba8;
    background: #fff;
    border: 1px solid #d0d5da;
    border-bottom: 0;
    padding: 7px 18px 0;
}

.collapse {
    margin: 4px 8px 0 auto;
}

.collapse svg {
    width: 10px;
    height: 10px;
    fill: none;
    stroke: #444;
}

/* ribbon */
.ribbon {
    display: flex;
    height: 105px;
    margin-top: -1px;
    border: 1px solid #d0d5da;
    padding: 2px 0;
}

.group {
    display: flex;
    flex-direction: column;
    justify-content: space-between;
    border-right: 1px solid #d0d5da;
    white-space: nowrap;
}

.group h2 {
    text-align: center;
    padding-bottom: 2px;
}

.build { flex: 0 0 569px; }
.estimate { flex: 0 0 354px; }
.measure { flex: 0 0 600px; }
.pmi { flex: 0 0 143px; }
.report { flex: 0 0 182px; }

.group button:disabled {
    color: #aaa;
}

.big {
    display: grid;
    grid-template-columns: 68px 70px 82px 82px 106px 60px 94px;
    padding: 5px 0 0 5px;
}

.big svg {
    display: block;
    width: 32px;
    height: 32px;
    margin: 0 auto 4px;
}

.cols {
    display: grid;
    grid-template-columns: 176px 1fr;
    padding: 3px 0 0 8px;
}

.measure .cols {
    grid-template-columns: 179px 248px 1fr;
}

.pmi .cols,
.report .cols {
    grid-template-columns: 1fr;
}

.cols button {
    display: flex;
    align-items: center;
    gap: 5px;
    height: 25px;
}

.cols svg {
    width: 20px;
    height: 20px;
}

/* work area */
main {
    flex: 1;
    display: flex;
    min-height: 0;
}

.viewport {
    flex: 1;
    min-width: 0;
    display: flex;
    flex-direction: column;
    background: #bbdefa;
}

.canvas {
    flex: 1;
    position: relative;
    min-height: 0;
}

.scene {
    position: absolute;
    width: 100%;
    height: 100%;
    font-family: "Liberation Sans", sans-serif;
}

.scene .sky { fill: #bbdefa; stroke: #333; }
.scene .ledge { fill: #7a7876; stroke: #262626; }
.scene .cut { fill: #444; stroke: #222; }
.scene .chip { fill: #bbb; }

.ring path {
    vector-effect: non-scaling-stroke;
}

.scene .edge {
    fill: none;
    stroke: #2c2c2c;
}

.scene .thick {
    stroke-width: 2;
}

.scene .dash {
    fill: none;
    stroke: #444;
    stroke-dasharray: 4 3;
}

.scene .probe {
    stroke: #2aa5dc;
}

.scene .face {
    fill: #777;
    font-family: "DejaVu Sans", sans-serif;
    font-weight: bold;
}

.tag {
    position: absolute;
    display: grid;
    grid-template-columns: 20px 23px 34px;
    height: 22px;
    background: #f8ecd9;
    border: 1px solid #111;
    color: #111;
    font: 14px/20px "Liberation Sans", "DejaVu Sans", sans-serif;
    text-align: center;
}

.tag span + span {
    border-left: 1px solid #111;
}

.tag-a { left: 673px; top: 200px; }
.tag-b { left: 656px; top: 311px; }
.tag-c { left: 700px; top: 642px; }
.tag-d { left: 486px; top: 406px; }
.tag-e { left: 403px; top: 597px; }

.ruler {
    height: 45px;
    position: relative;
    display: flex;
    overflow: hidden;
    border-top: 1px solid #4a6078;
    background:
        repeating-linear-gradient(90deg, #33465a 0 1px, transparent 1px 238px) 0 0 / 100% 13px no-repeat,
        repeating-linear-gradient(90deg, #33465a 0 1px, transparent 1px 119px) 0 0 / 1500px 8px no-repeat,
        repeating-linear-gradient(90deg, #33465a 0 1px, transparent 1px 23.8px) 0 0 / 1500px 4px no-repeat,
        linear-gradient(#e8f4fe, #c2e1fa);
    color: #000;
    font: 16px/18px "Liberation Sans", sans-serif;
    padding-top: 19px;
}

.ruler span {
    flex: 0 0 238px;
    text-align: center;
}

.ruler .zero {
    flex-basis: 118px;
    padding-left: 2px;
    text-align: left;
}

.ruler b {
    position: absolute;
    right: 12px;
    top: 15px;
    font-weight: 400;
}

/* docked panels, mostly behind the wizard */
.docks {
    flex: 0 0 395px;
    border-right: 1px solid #d0d5da;
}

.docks section {
    height: 57px;
    border-bottom: 1px solid #999;
}

.docks section > header {
    display: flex;
    align-items: center;
    padding-right: 10px;
    height: 32px;
}

.docks header i {
    flex: 1;
    height: 6px;
    margin-right: 12px;
    background: conic-gradient(#444 25%, #fff 0 50%, #444 0 75%, #fff 0) 0 0 / 4px 4px;
    opacity: .8;
}

.docks header button {
    font: bold 15px/12px "Liberation Sans", sans-serif;
    color: #000;
}

.strip {
    display: flex;
    height: 24px;
    justify-content: flex-end;
    line-height: 28px;
    color: #111;
}

.strip span {
    padding-right: 4px;
}

.strip.part span {
    padding-right: 25px;
}

.strip.shell span {
    padding-right: 30px;
}

.strip.shell span + span {
    padding-right: 0;
}

.strip button {
    width: 19px;
    border: 1px solid #888;
    border-bottom: 0;
    display: grid;
    place-items: center;
}

.strip button + button {
    border-left: 0;
    width: 19px;
}

.strip button::before {
    content: "";
    border: 7px solid transparent;
}

.strip .prev::before {
    border-left: 0;
    border-right-color: #888;
}

.strip .next::before {
    border-right: 0;
    border-left-color: #000;
}

/* bottom toolbar */
.toolbar {
    height: 35px;
    display: flex;
    align-items: center;
    padding-left: 4px;
}

.toolbar button {
    width: 29px;
    height: 30px;
    margin-right: 2px;
    display: grid;
    place-items: center;
}

.toolbar svg {
    width: 24px;
    height: 24px;
}

.toolbar .drop {
    margin: 0 4px 0 3px;
    border-width: 3px;
    border-bottom: 0;
}

.toolbar .vline {
    margin: 0 3px 0 2px;
}

.toolbar .on {
    background: #9cc8ea;
    margin-right: 0;
}

.toolbar .more {
    width: 14px;
    margin: 0;
}

.toolbar .lit {
    background: #cde4f7;
}

.grip {
    width: 2px;
    height: 22px;
    margin-right: 6px;
    background: repeating-linear-gradient(#333 0 2px, transparent 2px 4px);
}

footer {
    height: 23px;
    padding: 4px 6px;
    background: #2899ff;
    border-bottom: 2px solid #0d4a86;
    color: #0c2a4c;
    line-height: 17px;
}

/* fix wizard */
.dialog {
    position: absolute;
    top: 133px;
    right: 104px;
    width: 771px;
    height: 712px;
    display: flex;
    flex-direction: column;
    background: #f0f0f0;
    border: 1px solid #8a8a8a;
    box-shadow: 0 1px 9px rgba(0, 0, 0, .5);
    color: #111;
    z-index: 2;
}

.dialog > header {
    display: flex;
    align-items: center;
    height: 37px;
    background: #fff;
    padding-left: 11px;
}

.dialog > header > svg {
    width: 17px;
    height: 17px;
}

.dialog h2 {
    flex: 1;
    padding-left: 6px;
    font-size: 14px;
    color: #999;
}

.dialog > header button {
    width: 59px;
    height: 30px;
}

.dialog > header button svg {
    width: 13px;
    height: 13px;
    fill: none;
    stroke: #777;
}

.dialog > header .off svg {
    stroke: #ddd;
}

.panes {
    flex: 1;
    display: flex;
    padding: 5px 10px 5px 5px;
    gap: 9px;
}

.pages {
    flex: 0 0 152px;
    background: #fff;
    border: 2px solid;
    border-color: #888 #999 #999 #888;
    font-size: 14px;
    line-height: 24px;
    padding: 2px 7px 0 0;
}

.pages a {
    display: flex;
    gap: 3px;
    padding-left: 5px;
    height: 24px;
}

.pages svg {
    width: 19px;
    height: 20px;
    margin-top: 1px;
}

.pages .current {
    background: linear-gradient(#eee, #eee) 24px 0 no-repeat;
}

.pages hr {
    margin: 11px 0 12px;
    border: 0;
    border-top: 1px solid #777;
}

.content {
    flex: 1;
    display: flex;
    flex-direction: column;
}

.partrow {
    display: flex;
    align-items: flex-start;
    height: 40px;
    padding-left: 8px;
}

.partrow label {
    width: 91px;
}

.partrow select {
    flex: 1;
    height: 26px;
    padding: 0 3px;
    appearance: none;
    background: #e1e1e1;
    border: 1px solid #aaa;
    border-radius: 0;
    font: inherit;
    color: inherit;
    background-image: linear-gradient(45deg, transparent 46%, #444 46% 60%, transparent 60%), linear-gradient(-45deg, transparent 46%, #444 46% 60%, transparent 60%);
    background-size: 5px 5px;
    background-repeat: no-repeat;
    background-position: right 10px top 10px, right 5px top 10px;
}

.dialog .partrow button {
    width: 57px;
    height: 29px;
    margin: 1px -4px 0 4px;
    background: #ccc;
    border: 1px solid #bfbfbf;
    color: #888;
}

.sheet {
    height: 481px;
    padding: 33px 12px 14px;
    border: 1px solid #999;
    border-radius: 4px;
    background: linear-gradient(#fff, #fbfbfb 30%, #f0f0f0 75%);
}

fieldset {
    position: relative;
    margin: 0;
    border: 1px solid #dcdcdc;
    padding: 0;
    min-width: 0;
}

legend {
    margin-left: 6px;
    padding: 0 2px;
    height: 17px;
}

.advice {
    height: 95px;
    margin-top: -7px;
    display: flex;
    justify-content: space-between;
}

.advice p {
    margin: 9px 0 0 15px;
    white-space: nowrap;
}

.scroller {
    flex: none;
    width: 20px;
    height: 57px;
    margin: 9px 12px 0 0;
    padding: 7px 0;
    background: #f0f0f0;
    display: flex;
    flex-direction: column;
    align-items: center;
    justify-content: space-between;
}

.scroller svg {
    width: 10px;
    height: 7px;
    fill: none;
    stroke: #aaa;
    stroke-width: 2;
}

.diag {
    height: 340px;
    margin-top: 5px;
    display: flow-root;
}

input[type="checkbox"] {
    appearance: none;
    flex: none;
    width: 16px;
    height: 16px;
    margin: 0;
    border: 1px solid #333;
    background: #fff;
    display: grid;
    place-items: center;
}

input[type="checkbox"]:checked::before {
    content: "";
    width: 5px;
    height: 9px;
    border: solid #444;
    border-width: 0 1px 1px 0;
    transform: rotate(42deg);
}

.full {
    display: flex;
    align-items: center;
    gap: 3px;
    margin: 11px 0 15px 12px;
}

.row {
    display: grid;
    grid-template-columns: 25px 25px 56px 1fr;
    align-items: center;
    height: 25px;
    margin-left: 37px;
}

.row.sub {
    margin-left: 62px;
}

.row svg {
    width: 16px;
    height: 16px;
    margin-bottom: 3px;
}

.dot {
    width: 4px;
    height: 4px;
    border-radius: 2px;
    margin-left: 6px;
    background: #3434c4;
}

.update,
.actions button {
    display: flex;
    align-items: center;
    background: #e1e1e1;
    border: 1px solid #adadad;
}

.update svg,
.follow svg {
    width: 20px;
    height: 20px;
    margin-left: 3px;
    --h: #d9a84a;
}

.update span,
.follow span {
    flex: 1;
    text-align: center;
    padding-right: 8px;
}

.update {
    width: 139px;
    height: 30px;
    margin: 13px 12px 0 auto;
    font-size: 13px;
}

.actions {
    display: flex;
    justify-content: flex-end;
    gap: 8px;
    margin: auto 15px 0 0;
}

.actions button {
    width: 73px;
    height: 31px;
    justify-content: center;
}

.actions .follow {
    width: 189px;
    background: #ccc;
    border-color: #bfbfbf;
    color: #a0a0a0;
    font: 14px "Liberation Sans", sans-serif;
    text-shadow: 1px 1px 0 #fff;
}

.resize {
    position: absolute;
    right: 0;
    bottom: 0;
    width: 14px;
    height: 14px;
    background: repeating-linear-gradient(135deg, #888 0 1px, transparent 1px 4px);
    clip-path: polygon(100% 0, 100% 100%, 0 100%);
}
```
